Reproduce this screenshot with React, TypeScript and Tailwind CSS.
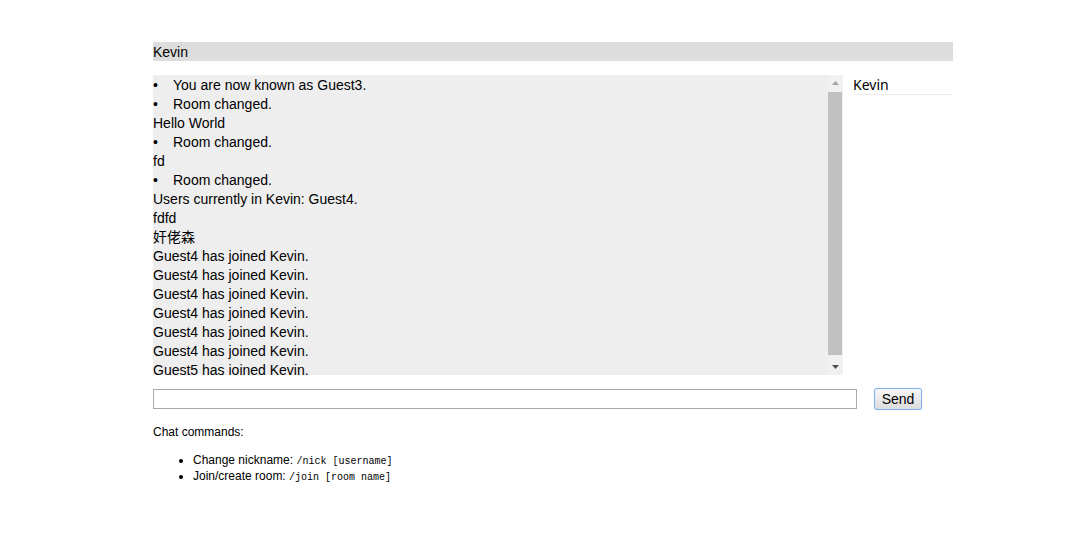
const messages: { text: string; system?: boolean }[] = [
  { text: 'You are now known as Guest3.', system: true },
  { text: 'Room changed.', system: true },
  { text: 'Hello World' },
  { text: 'Room changed.', system: true },
  { text: 'fd' },
  { text: 'Room changed.', system: true },
  { text: 'Users currently in Kevin: Guest4.' },
  { text: 'fdfd' },
  { text: '奸佬森' },
  { text: 'Guest4 has joined Kevin.' },
  { text: 'Guest4 has joined Kevin.' },
  { text: 'Guest4 has joined Kevin.' },
  { text: 'Guest4 has joined Kevin.' },
  { text: 'Guest4 has joined Kevin.' },
  { text: 'Guest4 has joined Kevin.' },
  { text: 'Guest5 has joined Kevin.' },
  { text: 'Guest5 has joined Kevin.' },
];

const sans = "font-['Liberation_Sans','Noto_Sans_CJK_SC',sans-serif]";

function Scrollbar(): JSX.Element {
  return (
    <div className="w-[16px] h-full flex flex-col bg-[#f1f1f1] shrink-0">
      <div className="h-[16px] flex items-center justify-center">
        <svg width="7" height="4" viewBox="0 0 7 4">
          <polygon points="3.5,0 7,4 0,4" fill="#a3a3a3" />
        </svg>
      </div>
      <div className="flex-1 px-[1px] pt-[1px] pb-[4px]">
        <div className="w-full h-full bg-[#c1c1c1]"></div>
      </div>
      <div className="h-[16px] flex items-center justify-center">
        <svg width="7" height="4" viewBox="0 0 7 4">
          <polygon points="0,0 7,0 3.5,4" fill="#505050" />
        </svg>
      </div>
    </div>
  );
}

export default function App(): JSX.Element {
  return (
    <div className={`min-h-screen bg-white text-black ${sans}`}>
      <div className="w-[800px] ml-[153px] pt-[42px]">
        <div className="h-[19px] bg-[#dddddd] text-[14px] leading-[19px] pt-[1px]">Kevin</div>

        <div className="flex mt-[14px]">
          <div className="w-[690px] h-[300px] bg-[#eeeeee] flex">
            <div className="flex-1 overflow-hidden text-[14px] leading-[19px] pt-[1px]">
              {messages.map((m, i) => (
                <div key={i} className="flex whitespace-nowrap">
                  {m.system && <span className="w-[20px] shrink-0">•</span>}
                  <span>{m.text}</span>
                </div>
              ))}
            </div>
            <Scrollbar />
          </div>
          <div className="w-[100px] ml-[10px]">
            <div className="font-['Noto_Sans',sans-serif] text-[14px] leading-[19px] border-b border-[#eeeeee]">
              Kevin
            </div>
          </div>
        </div>

        <div className="flex items-center mt-[13px]">
          <input
            type="text"
            className="w-[704px] h-[20px] border border-[#a9a9a9] bg-white outline-none px-[2px] text-[13px]"
          />
          <button className="ml-[17px] w-[48px] h-[22px] border border-[#7eb4ea] rounded-[3px] bg-gradient-to-b from-[#f6f6f6] to-[#dcdcdc] text-[14px] leading-[20px] font-['Liberation_Sans',sans-serif] shadow-[0_0_1px_#7eb4ea]">
            Send
          </button>
        </div>

        <p className="mt-[14px] text-[12px] leading-[16px]">Chat commands:</p>
        <ul className="mt-[12px] pl-[40px] list-disc text-[12px] leading-[16px]">
          <li className="h-[16px]">
            Change nickname:{' '}
            <code className="font-['Liberation_Mono',monospace] text-[10px] leading-[16px]">/nick [username]</code>
          </li>
          <li className="h-[16px]">
            Join/create room:{' '}
            <code className="font-['Liberation_Mono',monospace] text-[10px] leading-[16px]">/join [room name]</code>
          </li>
        </ul>
      </div>
    </div>
  );
}
